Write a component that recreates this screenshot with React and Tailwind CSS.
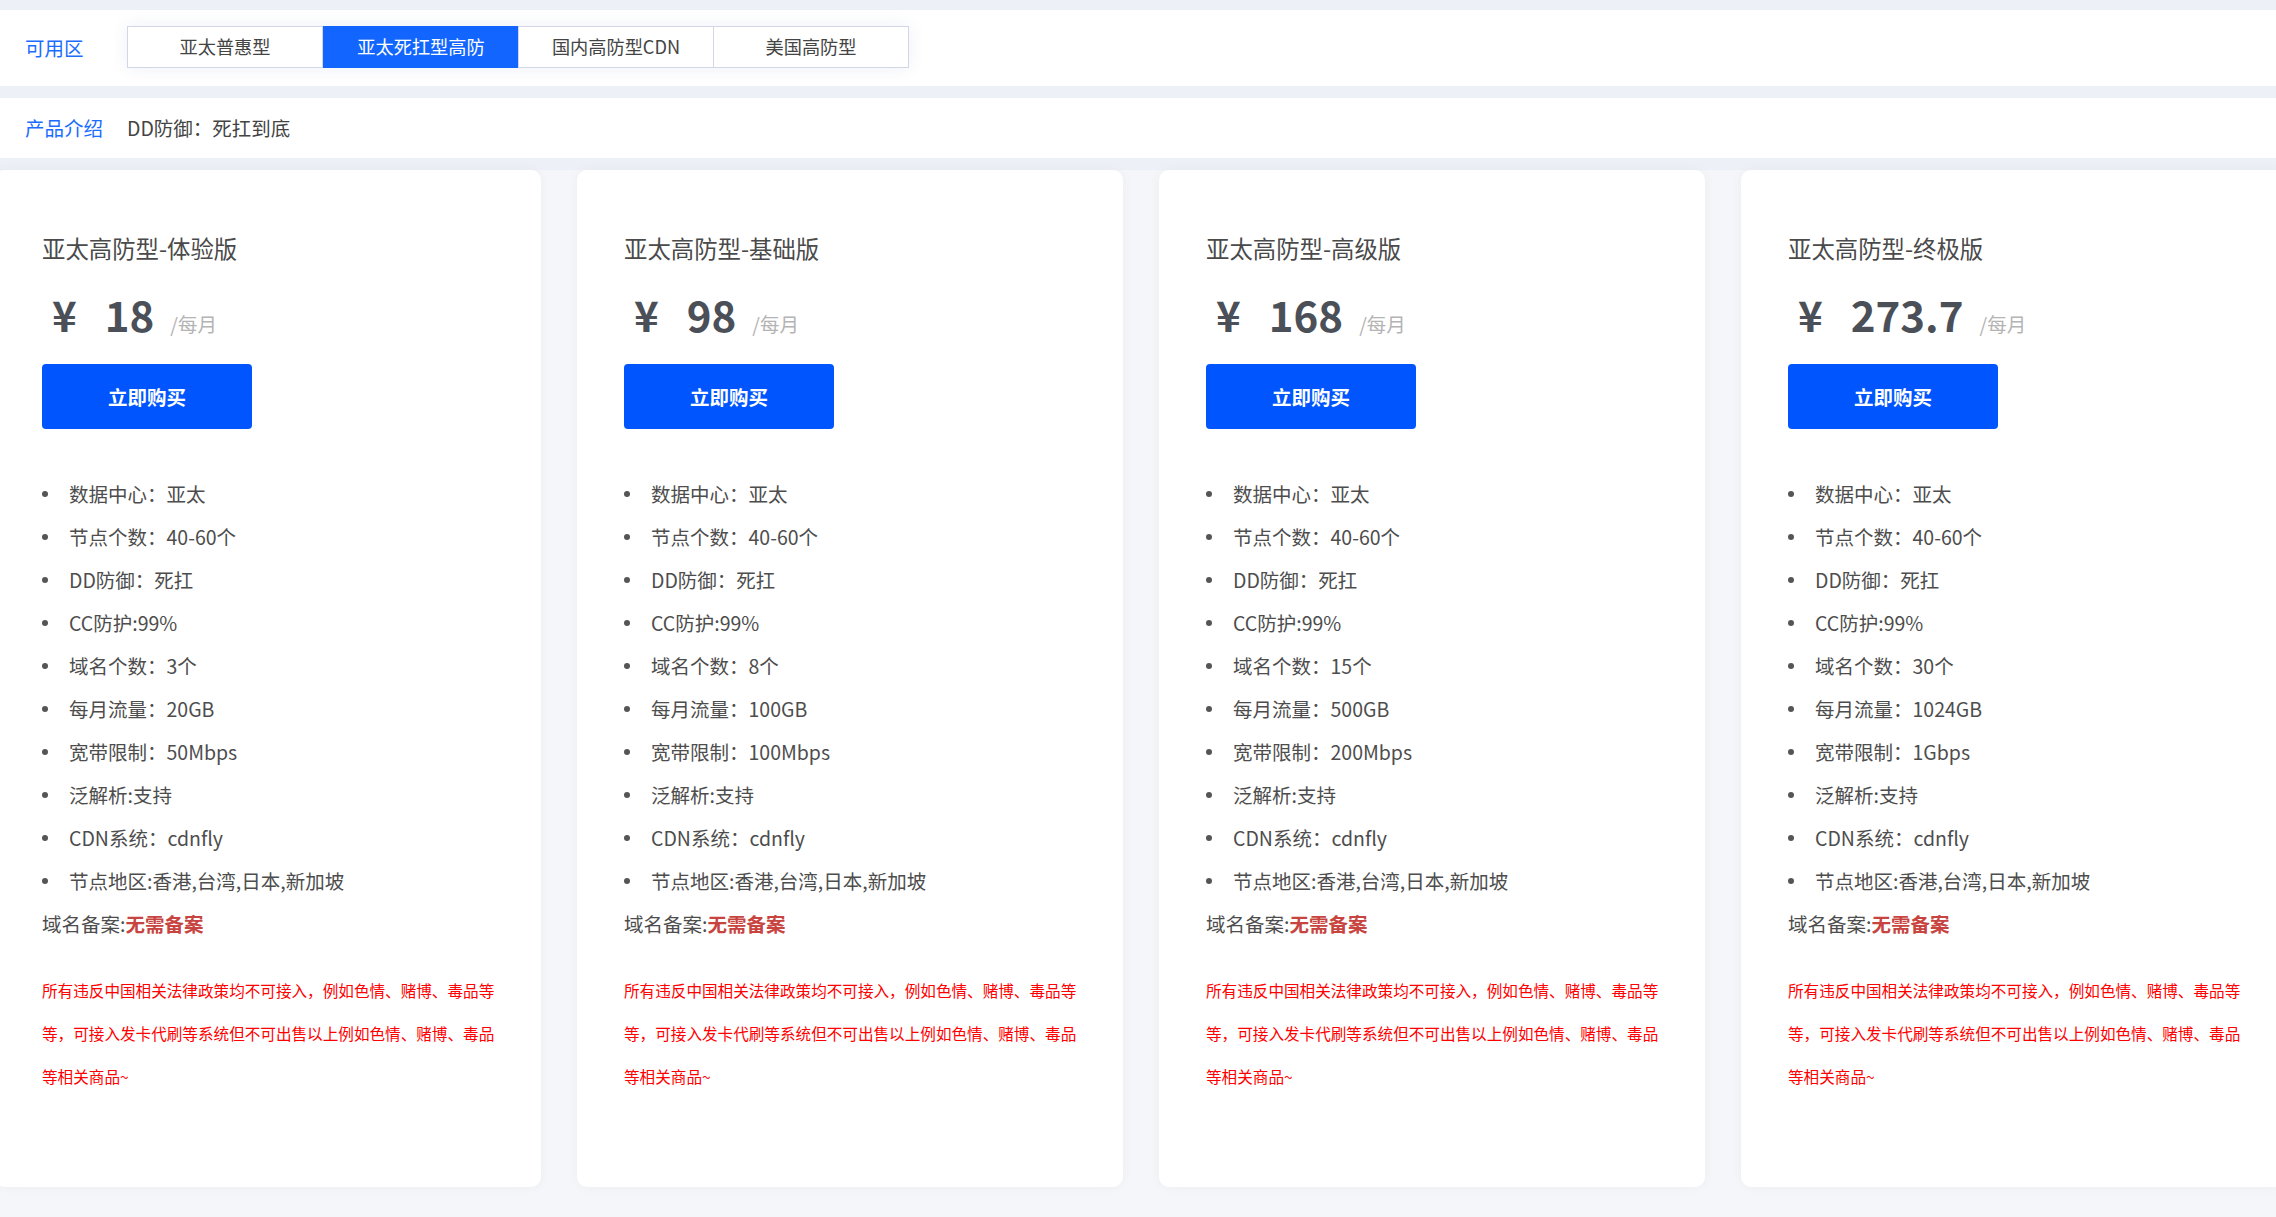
import React from "react";

const tabs = ["亚太普惠型", "亚太死扛型高防", "国内高防型CDN", "美国高防型"];

const plans = [
  { name: "亚太高防型-体验版", price: "18", domains: "3个", traffic: "20GB", bw: "50Mbps" },
  { name: "亚太高防型-基础版", price: "98", domains: "8个", traffic: "100GB", bw: "100Mbps" },
  { name: "亚太高防型-高级版", price: "168", domains: "15个", traffic: "500GB", bw: "200Mbps" },
  { name: "亚太高防型-终极版", price: "273.7", domains: "30个", traffic: "1024GB", bw: "1Gbps" },
];

function Card({ p }) {
  const items = [
    "数据中心：亚太",
    "节点个数：40-60个",
    "DD防御：死扛",
    "CC防护:99%",
    "域名个数：" + p.domains,
    "每月流量：" + p.traffic,
    "宽带限制：" + p.bw,
    "泛解析:支持",
    "CDN系统：cdnfly",
    "节点地区:香港,台湾,日本,新加坡",
  ];
  return (
    <div className="w-[546px] h-[1017px] shrink-0 rounded-[10px] bg-white shadow-[0_0_12px_rgba(20,30,60,0.04)] pl-[47px] pr-[43px] pt-[66px]">
      <div className="text-[23.4px] leading-[24px] text-[#4a4a4a] whitespace-nowrap">{p.name}</div>
      <div className="mt-[32px] h-[43px] flex items-baseline leading-[43px] whitespace-nowrap">
        <span className="ml-[10px] text-[42px] font-bold text-[#4b5058]">¥</span>
        <span className="ml-[28px] text-[42px] font-bold text-[#4b5058]">{p.price}</span>
        <span className="ml-[16px] text-[19.5px] text-[#b4b4b4]">/每月</span>
      </div>
      <button className="mt-[29px] w-[210px] h-[65px] rounded-[4px] bg-[#0055ff] text-white text-[19.5px] font-bold flex items-center justify-center">
        立即购买
      </button>
      <div className="mt-[43px] text-[19.5px] leading-[43px] text-[#4d4d4d]">
        {items.map((t) => (
          <div key={t} className="flex items-center whitespace-nowrap">
            <span className="w-[6px] h-[6px] rounded-full bg-[#555] mr-[21px]" />
            <span>{t}</span>
          </div>
        ))}
        <div className="whitespace-nowrap">
          域名备案:<span className="font-bold text-[#c74440]">无需备案</span>
        </div>
      </div>
      <div className="mt-[24px] text-[15.6px] leading-[43px] text-[#ff0000] w-[456px]">
        所有违反中国相关法律政策均不可接入，例如色情、赌博、毒品等等，可接入发卡代刷等系统但不可出售以上例如色情、赌博、毒品等相关商品~
      </div>
    </div>
  );
}

export default function App() {
  return (
    <div
      className="min-h-screen w-full overflow-hidden bg-[#f5f6f9]"
      style={{ fontFamily: '"Noto Sans CJK SC", "Noto Sans", sans-serif' }}
    >
      <div className="bg-[#eef0f7] pt-[10px] pb-[12px]">
        <div className="h-[76px] bg-white flex items-center pl-[25px]">
          <div className="w-[102px] text-[19.5px] text-[#1a6dff]">可用区</div>
          <div className="flex -mt-[2px] shadow-[0_0_18px_rgba(40,60,140,0.08)]">
            {tabs.map((t, i) => (
              <div
                key={t}
                className={
                  i === 1
                    ? "w-[196px] h-[42px] flex items-center justify-center text-[18.2px] bg-[#1266ff] text-white border border-[#1266ff]"
                    : "w-[196px] h-[42px] flex items-center justify-center text-[18.2px] bg-white text-[#444] border border-[#d3d6e6] -ml-px first:ml-0"
                }
              >
                {t}
              </div>
            ))}
          </div>
        </div>
        <div className="mt-[12px] h-[60px] bg-white flex items-center pl-[25px]">
          <div className="w-[102px] text-[19.5px] text-[#1a6dff]">产品介绍</div>
          <div className="text-[19.5px] text-[#444]">DD防御：死扛到底</div>
        </div>
      </div>
      <div className="flex gap-[36px] -ml-[5px] pb-[30px]">
        {plans.map((p) => (
          <Card key={p.name} p={p} />
        ))}
      </div>
    </div>
  );
}
